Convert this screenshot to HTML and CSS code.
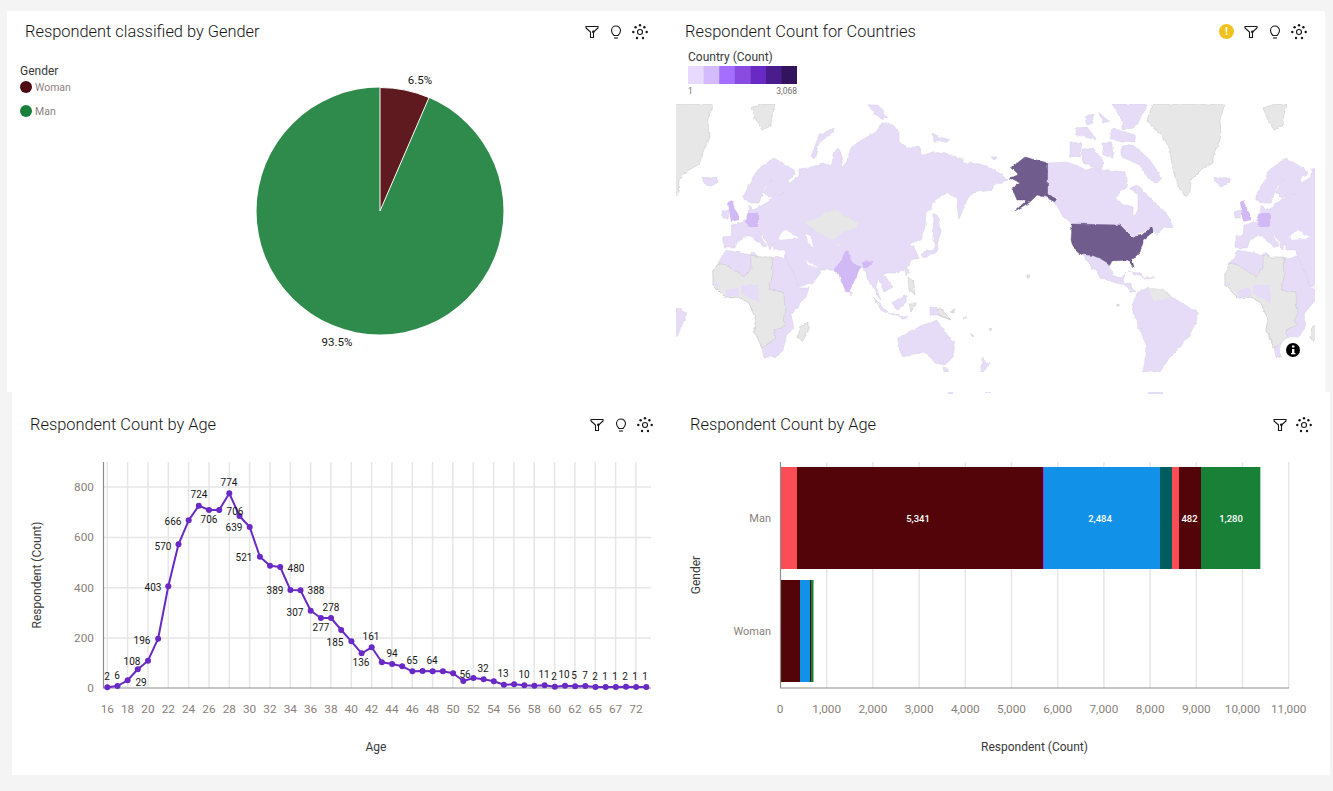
FILE: index.html
```html
<!DOCTYPE html>
<html lang="en">
<head>
<meta charset="utf-8">
<title>Respondent dashboard</title>
<link rel="stylesheet" href="styles.css">
</head>
<body>
<svg class="defs" width="0" height="0" aria-hidden="true">
  <defs>
    <symbol id="i-filter" viewBox="0 0 16 16"><path class="ico" d="M2 2.500h12v1.500L9.500 8v5.500H6.500V8L2 4z"/><circle class="icod" cx="9.300" cy="7.800" r="1.300"/></symbol>
    <symbol id="i-bulb" viewBox="0 0 16 16"><path class="ico" d="M6 11.500C4.500 10 3.500 8.500 3.500 6.500a4.500 4.500 0 0 1 9 0c0 2-1 3.500-2.500 5z"/><path class="ico" d="M6 14h4"/></symbol>
    <symbol id="i-cluster" viewBox="0 0 16 16"><circle class="ico" cx="8" cy="8" r="2.500"/><circle class="icod" cx="8" cy="1.300" r="1.200"/><circle class="icod" cx="3.600" cy="3.300" r="1.200"/><circle class="icod" cx="12.400" cy="3.300" r="1.200"/><circle class="icod" cx="1.300" cy="8" r="1.200"/><circle class="icod" cx="14.700" cy="8" r="1.200"/><circle class="icod" cx="5" cy="14" r="1.200"/><circle class="icod" cx="11" cy="14" r="1.200"/></symbol>
    <marker id="dot" markerUnits="userSpaceOnUse" markerWidth="8" markerHeight="8" refX="4" refY="4"><circle cx="4" cy="4" r="3" fill="#6929c4"/></marker>
    <clipPath id="mapclip"><rect x="676" y="104" width="639" height="268"/></clipPath>
    <filter id="coast" filterUnits="userSpaceOnUse" x="640" y="80" width="720" height="320">
      <feTurbulence type="fractalNoise" baseFrequency="0.16" numOctaves="2" seed="4"/>
      <feDisplacementMap in="SourceGraphic" scale="3.500" xChannelSelector="R" yChannelSelector="G"/>
      <feGaussianBlur stdDeviation="0.350"/>
    </filter>
    <g id="world">
      <polygon class="g" points="1153,104 1150,112 1147,120 1153,128 1160,133 1166,142 1170,150 1172,165 1175,177 1180,190 1187,197 1190,193 1191,180 1201,170 1213,163 1213,157 1221,137 1220,120 1225,104"/>
      <polygon class="g" points="751,108 762,104 775,104 772,115 771,125 762,130 755,118"/>
      <polygon class="p" points="702,177 710,178 718,177 718,182 709,187 704,183"/>
      <polygon class="p" points="722,212 729,210 728,218 723,218"/>
      <polygon class="p" points="723,237 731,236 732,225 744,222 748,213 749,205 754,210 766,203 771,198 783,194 769,197 763,192 771,180 764,188 759,203 751,203 744,200 744,195 759,168 774,158 794,170 795,175 788,179 789,183 799,177 799,169 808,168 823,163 832,166 833,153 838,148 841,153 843,168 846,163 851,148 858,142 876,132 882,123 893,125 899,132 899,142 909,148 919,146 922,155 933,153 943,152 950,155 963,159 963,163 980,164 995,170 1008,180 993,185 993,190 972,193 967,200 959,219 957,207 958,198 947,193 935,200 930,210 926,213 925,226 921,240 908,244 914,247 919,258 914,258 911,260 909,267 896,273 884,273 889,282 893,287 884,292 878,278 876,287 881,300 875,290 869,282 864,268 861,267 849,292 846,292 839,275 833,270 823,270 818,268 821,272 814,282 799,287 786,266 785,258 784,250 774,250 773,243 770,250 766,240 758,231 767,246 763,247 750,236 745,236 738,240 735,248 726,248 723,247"/>
      <polygon class="w" points="806,233 808,243 813,246 811,237"/>
      <polygon class="w" points="778,237 786,230 799,238 780,240"/>
      <polygon class="w" points="806,260 819,268 809,265"/>
      <polygon class="gi" points="804,222 823,217 824,212 836,210 846,217 859,223 856,228 843,232 833,240 816,232"/>
      <polygon class="gi" points="834,243 841,244 840,247"/>
      <polygon class="p" points="811,157 819,135 834,128 833,132 819,143 814,160"/>
      <polygon class="p" points="868,105 878,105 888,117 883,120 876,115"/>
      <polygon class="p" points="932,133 940,137 950,140 940,142 933,142"/>
      <polygon class="p" points="990,157 997,157 995,160"/>
      <polygon class="p" points="934,213 939,217 941,232 937,245 933,240"/>
      <polygon class="p" points="921,256 924,252 933,250 935,242 937,242 938,250 932,254 924,258"/>
      <polygon class="p" points="723,255 726,250 751,255 753,252 759,257 766,258 786,257 798,285 799,288 809,288 806,297 791,315 794,327 786,337 783,350 776,357 764,357 762,348 754,330 756,320 749,303 739,297 726,298 713,285 713,273 718,263"/>
      <polygon class="g" points="718,263 726,265 744,277 751,268 751,255 759,257 772,257 773,273 769,290 784,292 785,318 783,320 786,325 774,330 776,338 762,348 754,330 756,320 749,303 739,297 726,298 713,285 713,273"/>
      <polygon class="f" points="726,290 738,288 739,295 726,298"/>
      <polygon class="f" points="741,285 758,285 759,302 749,298 741,293"/>
      <polygon class="f" points="713,282 719,283 717,287"/>
      <polygon class="g" points="808,322 808,332 802,342 798,338 800,327"/>
      <polygon class="p" points="873,297 888,312 884,313"/>
      <polygon class="p" points="888,313 908,318 903,318"/>
      <polygon class="p" points="891,303 906,295 906,302 898,310"/>
      <polygon class="g" points="908,277 913,280 916,295 909,290"/>
      <polygon class="g" points="909,303 916,303 911,312"/>
      <polygon class="p" points="849,290 853,293 851,296"/>
      <polygon class="p" points="905,268 909,270 906,276"/>
      <polygon class="p" points="930,307 940,308 951,320 937,315 930,315"/>
      <polygon class="g" points="937,309 940,308 951,320 941,316"/>
      <polygon class="p" points="898,338 918,327 931,322 937,320 943,330 955,343 953,357 945,365 935,363 930,357 923,352 903,357 898,347"/>
      <polygon class="p" points="943,367 948,368 948,372 944,372"/>
      <polygon class="p" points="983,357 987,365 991,363 983,372 980,372"/>
      <polygon class="g" points="1026,275 1029,275 1029,278 1026,278"/>
      <polygon class="g" points="1117,304 1119,304 1119,306 1117,306"/>
      <polygon class="g" points="970,333 974,336 973,337 970,335"/>
      <polygon class="g" points="989,328 992,329 990,331"/>
      <polygon class="g" points="964,317 966,317 966,319 964,319"/>
      <polygon class="g" points="950,312 955,310 954,313"/>
      <polygon class="s" points="1025,157 1048,163 1048,195 1058,200 1055,202 1045,197 1037,195 1030,202 1015,211 1027,200 1017,200 1012,188 1020,183 1009,178 1018,175 1011,168"/>
      <polygon class="s" points="1062,207 1064,207 1063,211"/>
      <polygon class="p" points="1048,163 1067,162 1087,170 1093,168 1107,170 1125,172 1127,187 1115,197 1120,203 1133,207 1133,217 1138,210 1138,195 1130,188 1137,185 1150,198 1168,215 1173,228 1163,227 1157,235 1152,228 1143,232 1132,237 1120,227 1073,224 1062,215 1055,202 1058,198 1048,195"/>
      <polygon class="p" points="1122,147 1133,145 1150,160 1162,178 1157,183 1148,178 1140,165 1122,157"/>
      <polygon class="p" points="1082,150 1093,148 1105,163 1100,170 1083,163"/>
      <polygon class="p" points="1070,143 1082,142 1080,158 1070,157"/>
      <polygon class="p" points="1112,104 1148,104 1137,125 1123,130 1123,122"/>
      <polygon class="p" points="1075,128 1087,127 1097,140 1077,135"/>
      <polygon class="p" points="1085,117 1093,115 1093,123 1087,125"/>
      <polygon class="p" points="1098,112 1110,122 1103,122"/>
      <polygon class="p" points="1112,128 1135,135 1135,142 1110,140"/>
      <polygon class="p" points="1102,143 1112,143 1113,158 1103,155"/>
      <polygon class="s" points="1072,224 1120,225 1127,232 1132,237 1143,235 1152,227 1153,232 1143,240 1143,243 1140,252 1132,260 1134,267 1133,267 1128,260 1112,261 1110,265 1102,260 1093,256 1082,255 1073,247 1071,240"/>
      <polygon class="p" points="1082,255 1093,256 1102,260 1110,265 1112,275 1120,278 1125,273 1123,282 1130,283 1135,293 1130,292 1125,285 1113,282 1100,277 1093,267 1093,270 1087,260"/>
      <polygon class="p" points="1137,293 1147,288 1163,290 1177,300 1190,308 1199,313 1190,335 1180,347 1170,357 1160,372 1143,372 1147,347 1133,313 1133,303"/>
      <polygon class="gi" points="1147,288 1162,289 1172,298 1160,300 1153,302 1152,295"/>
      <polygon class="p" points="1128,272 1140,273 1143,277 1133,273"/>
      <polygon class="p" points="1143,277 1155,278 1146,279"/>
      <polygon class="u" points="728,202 733,200 734,208 739,215 739,220 731,222 729,210"/>
      <polygon class="u" points="748,213 758,213 758,227 749,227 745,223"/>
      <polygon class="u" points="846,250 850,254 851,262 861,267 849,292 846,292 839,275 833,270 840,262"/>
      <polygon class="u" points="862,262 874,261 868,266 864,268"/>
    </g>
  </defs>
</svg>

<main class="dash">
  <section class="row row-top">
    <article class="card card-a">
      <header class="head">
        <h2 class="title">Respondent classified by Gender</h2>
        <div class="tools">
          <svg class="tool"><use href="#i-filter"/></svg>
          <svg class="tool"><use href="#i-bulb"/></svg>
          <svg class="tool"><use href="#i-cluster"/></svg>
        </div>
      </header>
      <svg class="chart" viewBox="7 47 663 345" width="663" height="345">
        <text class="lg" x="20" y="75">Gender</text>
        <circle cx="26" cy="87" r="6" fill="#4f0a12"/>
        <text class="lgi" x="35" y="91">Woman</text>
        <circle cx="26" cy="111" r="6" fill="#1b7f3c"/>
        <text class="lgi" x="35" y="115">Man</text>
        <circle cx="380" cy="211" r="123.500" fill="#2e8b4b"/>
        <path d="M380 211V87.500A123.500 123.500 0 0 1 429 97.600z" fill="#5f1a20" stroke="#fff" stroke-width="1"/>
        <text class="pct m" x="420" y="84">6.5%</text>
        <text class="pct m" x="337" y="346">93.5%</text>
      </svg>
    </article>
    <article class="card card-b">
      <header class="head">
        <h2 class="title">Respondent Count for Countries</h2>
        <div class="tools">
          <span class="warn">!</span>
          <svg class="tool"><use href="#i-filter"/></svg>
          <svg class="tool"><use href="#i-bulb"/></svg>
          <svg class="tool"><use href="#i-cluster"/></svg>
        </div>
      </header>
      <svg class="chart over" viewBox="670 47 655 345" width="655" height="345">
        <text class="lg" x="688" y="61">Country (Count)</text>
        <rect x="688" y="66" width="16" height="18" fill="#e8daff"/>
        <rect x="703.600" y="66" width="16" height="18" fill="#d4bbff"/>
        <rect x="719.200" y="66" width="16" height="18" fill="#a56eff"/>
        <rect x="734.800" y="66" width="16" height="18" fill="#8a4be0"/>
        <rect x="750.400" y="66" width="16" height="18" fill="#6929c4"/>
        <rect x="766" y="66" width="16" height="18" fill="#491d8b"/>
        <rect x="781.600" y="66" width="15.400" height="18" fill="#31135e"/>
        <text class="sm" x="688" y="94">1</text>
        <text class="sm e" x="797" y="94">3,068</text>
        <g clip-path="url(#mapclip)">
          <g class="land">
            <use href="#world" x="-512"/>
            <use href="#world"/>
            <use href="#world" x="512"/>
          </g>
        </g>
        <rect x="948" y="392" width="5" height="2" fill="#e6dcf7"/>
        <rect x="985" y="392" width="6" height="1" fill="#e6dcf7"/>
        <rect x="1148" y="392" width="15" height="2" fill="#e6dcf7"/>
        <circle cx="1293" cy="350" r="13" fill="#fff"/>
        <circle cx="1293" cy="350" r="7" fill="#000"/>
        <rect x="1292" y="349" width="2.400" height="5" fill="#fff"/>
        <rect x="1291" y="353" width="4.500" height="1.300" fill="#fff"/>
        <rect x="1292" y="345.500" width="2.400" height="2" fill="#fff"/>
      </svg>
    </article>
  </section>

  <section class="row row-bot">
    <article class="card card-c">
      <header class="head head-low">
        <h2 class="title">Respondent Count by Age</h2>
        <div class="tools">
          <svg class="tool"><use href="#i-filter"/></svg>
          <svg class="tool"><use href="#i-bulb"/></svg>
          <svg class="tool"><use href="#i-cluster"/></svg>
        </div>
      </header>
      <svg class="chart" viewBox="12 440 658 335" width="658" height="335">
        <path class="grid" d="M103 487H651M103 537.500H651M103 587.700H651M103 638H651"/>
        <path class="grid" d="M107.300 462V688M127.600 462V688M148 462V688M168.300 462V688M188.600 462V688M209 462V688M229.300 462V688M249.600 462V688M270 462V688M290.300 462V688M310.600 462V688M330.900 462V688M351.300 462V688M371.600 462V688M391.900 462V688M412.300 462V688M432.600 462V688M452.900 462V688M473.300 462V688M493.600 462V688M513.900 462V688M534.200 462V688M554.600 462V688M574.900 462V688M595.200 462V688M615.600 462V688M635.900 462V688"/>
        <path class="axis" d="M103.500 462V688H651"/>
        <polyline class="line" points="107.300,687.300 117.500,686 127.600,680.300 137.800,669.300 148,660.700 158.100,638.700 168.300,586.300 178.500,544.300 188.700,520.300 198.800,505.700 209,510 219.200,510 229.300,493.300 239.500,516 249.700,527 259.900,556.700 270,565.700 280.200,567 290.400,590 300.500,590.300 310.700,610.700 320.900,618 331,618 341.200,630 351.400,641.300 361.600,653.300 371.700,647.300 381.900,662.300 392.100,664 402.200,666.300 412.400,671.300 422.600,671 432.700,671.300 442.900,671.300 453.100,673.300 463.300,681 473.400,678 483.600,679.300 493.800,681.300 503.900,684.700 514.100,684.300 524.300,685.300 534.400,685.700 544.600,685.300 554.800,686.700 565,685.700 575.100,686.300 585.300,686 595.500,687 605.600,687 615.800,687 626,686.700 636.100,687 646.300,687"/>
        <g class="dl m">
          <text x="107" y="680">2</text><text x="117" y="679">6</text><text x="132" y="665">108</text><text x="141" y="686">29</text><text x="142" y="644">196</text><text x="153" y="591">403</text><text x="163" y="550">570</text><text x="173" y="525">666</text><text x="199" y="498">724</text><text x="209" y="523">706</text><text x="229" y="486">774</text><text x="235" y="515">706</text><text x="234" y="531">639</text><text x="244" y="561">521</text><text x="296" y="572">480</text><text x="275" y="594">389</text><text x="316" y="594">388</text><text x="295" y="616">307</text><text x="331" y="611">278</text><text x="321" y="631">277</text><text x="335" y="646">185</text><text x="371" y="640">161</text><text x="361" y="666">136</text><text x="392" y="657">94</text><text x="412" y="664">65</text><text x="432" y="664">64</text><text x="465" y="678">56</text><text x="483" y="672">32</text><text x="503" y="677">13</text><text x="524" y="678">10</text><text x="544" y="678">11</text><text x="554" y="680">2</text><text x="564" y="678">10</text><text x="574" y="679">5</text><text x="585" y="679">7</text><text x="595" y="680">2</text><text x="605" y="680">1</text><text x="615" y="680">1</text><text x="625" y="680">2</text><text x="635" y="680">1</text><text x="645" y="680">1</text>
        </g>
        <g class="tk e">
          <text x="94" y="491">800</text><text x="94" y="541">600</text><text x="94" y="592">400</text><text x="94" y="642">200</text><text x="94" y="692">0</text>
        </g>
        <g class="tk m">
          <text x="107.300" y="713">16</text><text x="127.600" y="713">18</text><text x="148" y="713">20</text><text x="168.300" y="713">22</text><text x="188.600" y="713">24</text><text x="209" y="713">26</text><text x="229.300" y="713">28</text><text x="249.600" y="713">30</text><text x="270" y="713">32</text><text x="290.300" y="713">34</text><text x="310.600" y="713">36</text><text x="330.900" y="713">38</text><text x="351.300" y="713">40</text><text x="371.600" y="713">42</text><text x="391.900" y="713">44</text><text x="412.300" y="713">46</text><text x="432.600" y="713">48</text><text x="452.900" y="713">50</text><text x="473.300" y="713">52</text><text x="493.600" y="713">54</text><text x="513.900" y="713">56</text><text x="534.200" y="713">58</text><text x="554.600" y="713">60</text><text x="574.900" y="713">62</text><text x="595.200" y="713">65</text><text x="615.600" y="713">67</text><text x="635.900" y="713">72</text>
        </g>
        <text class="at m" x="376" y="751">Age</text>
        <text class="at m" transform="translate(41 575) rotate(-90)">Respondent (Count)</text>
      </svg>
    </article>
    <article class="card card-d">
      <header class="head head-low">
        <h2 class="title">Respondent Count by Age</h2>
        <div class="tools">
          <svg class="tool"><use href="#i-filter"/></svg>
          <svg class="tool"><use href="#i-cluster"/></svg>
        </div>
      </header>
      <svg class="chart" viewBox="670 440 660 335" width="660" height="335">
        <path class="grid" d="M826.700 462V688M872.900 462V688M919.100 462V688M965.300 462V688M1011.500 462V688M1057.700 462V688M1103.900 462V688M1150.100 462V688M1196.300 462V688M1242.500 462V688M1288.700 462V688"/>
        <rect x="780" y="467" width="17" height="102" fill="#fa4d56"/>
        <rect x="797" y="467" width="246" height="102" fill="#520408"/>
        <rect x="1043" y="467" width="1" height="102" fill="#8a3ffc"/>
        <rect x="1044" y="467" width="116" height="102" fill="#1192e8"/>
        <rect x="1160" y="467" width="12" height="102" fill="#005d5d"/>
        <rect x="1172" y="467" width="7" height="102" fill="#fa4d56"/>
        <rect x="1179" y="467" width="22" height="102" fill="#520408"/>
        <rect x="1201" y="467" width="59" height="102" fill="#198038"/>
        <rect x="1260" y="467" width="1" height="102" fill="#a7d8b8"/>
        <rect x="780" y="580" width="20" height="102" fill="#520408"/>
        <rect x="800" y="580" width="10" height="102" fill="#1192e8"/>
        <rect x="810" y="580" width="1" height="102" fill="#520408"/>
        <rect x="811" y="580" width="2.500" height="102" fill="#198038"/>
        <path class="axis" d="M780.500 462V688H1289"/>
        <g class="bl m">
          <text x="918" y="522">5,341</text><text x="1100" y="522">2,484</text><text x="1189.500" y="522">482</text><text x="1231" y="522">1,280</text>
        </g>
        <g class="cat e">
          <text x="771" y="522">Man</text><text x="771" y="635">Woman</text>
        </g>
        <g class="tk m">
          <text x="780" y="713">0</text><text x="826.700" y="713">1,000</text><text x="872.900" y="713">2,000</text><text x="919.100" y="713">3,000</text><text x="965.300" y="713">4,000</text><text x="1011.500" y="713">5,000</text><text x="1057.700" y="713">6,000</text><text x="1103.900" y="713">7,000</text><text x="1150.100" y="713">8,000</text><text x="1196.300" y="713">9,000</text><text x="1242.500" y="713">10,000</text><text x="1288.700" y="713">11,000</text>
        </g>
        <text class="at m" x="1034.500" y="751">Respondent (Count)</text>
        <text class="at m" transform="translate(700 575) rotate(-90)">Gender</text>
      </svg>
    </article>
  </section>
</main>
</body>
</html>
```

FILE: styles.css
```css
* { box-sizing: border-box; }
html, body { margin: 0; padding: 0; }
body {
  background: #f4f4f4;
  font-family: "Roboto", "Liberation Sans", sans-serif;
  height: 791px;
  overflow: hidden;
}
.defs { position: absolute; }
.dash { display: flex; flex-direction: column; padding-top: 11px; }
.row { display: flex; background: #fff; width: 1318px; }
.row-top { margin-left: 7px; height: 381px; position: relative; z-index: 1; background: transparent; }
.row-bot { margin-left: 12px; height: 383px; }
.card { background: #fff; display: flex; flex-direction: column; }
.card-a { width: 663px; }
.card-b { width: 655px; }
.card-c { width: 658px; }
.card-d { width: 660px; }
.head {
  display: flex;
  justify-content: space-between;
  align-items: center;
  height: 36px;
  padding-top: 8px;
  padding-bottom: 3px;
  flex: none;
}
.head-low { height: 48px; padding-top: 17px; padding-bottom: 0; }
.card-a .head { padding-left: 18px; padding-right: 22px; }
.card-b .head { padding-left: 15px; padding-right: 18px; }
.card-c .head { padding-left: 18px; padding-right: 17px; }
.card-d .head { padding-left: 20px; padding-right: 18px; }
.title {
  margin: 0;
  font-size: 16.400px;
  font-weight: 300;
  line-height: 20px;
  color: #161616;
}
.tools { display: flex; align-items: center; gap: 8px; }
.tool { width: 16px; height: 16px; display: block; }
.warn {
  width: 15px;
  height: 15px;
  border-radius: 50%;
  background: #f1c21b;
  color: #fff;
  font-size: 11px;
  font-weight: 700;
  line-height: 15px;
  text-align: center;
  margin-right: 1px;
}
.ico { fill: none; stroke: #161616; stroke-width: 1.1; }
.icod { fill: #161616; }
.chart { display: block; flex: none; }
.over { overflow: visible; }
.land { filter: url(#coast); }

text { font-family: "Roboto", "Liberation Sans", sans-serif; }
.m, .m text { text-anchor: middle; }
.e, .e text { text-anchor: end; }
.lg { font-size: 12px; fill: #393939; }
.lgi { font-size: 10.500px; fill: #8d7f7f; }
.sm { font-size: 8.500px; fill: #6f6f6f; }
.pct { font-size: 11.500px; fill: #161616; }
.dl, .dl text { font-size: 10px; fill: #161616; }
.tk, .tk text { font-size: 11.800px; fill: #8a7f7a; }
.cat text { font-size: 11px; fill: #8a7f7a; }
.at { font-size: 12px; fill: #393939; }
.bl text { font-size: 9.500px; font-weight: 500; fill: #fff; }
.grid { stroke: #e6e6e6; stroke-width: 1.500; fill: none; }
.axis { stroke: #8d8d8d; stroke-width: 1.200; fill: none; }
.line {
  fill: none;
  stroke: #6929c4;
  stroke-width: 2;
  stroke-linejoin: round;
  marker-start: url(#dot);
  marker-mid: url(#dot);
  marker-end: url(#dot);
}
.p { fill: #e6dcf7; stroke: #d6cfe2; stroke-width: 0.500; }
.f { fill: #e6dcf7; }
.g { fill: #e7e7e7; stroke: #c2c2c2; stroke-width: 0.500; }
.gi { fill: #e7e7e7; }
.s { fill: #715b8e; stroke: #5e4a7c; stroke-width: 0.400; }
.u { fill: #d1b9f6; }
.w { fill: #fff; }
```
